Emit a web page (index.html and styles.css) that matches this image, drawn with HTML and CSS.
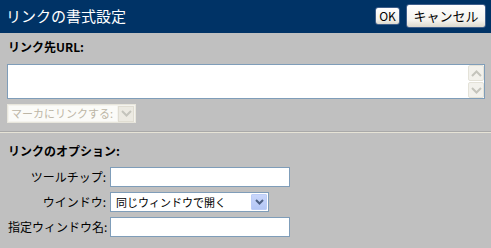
FILE: index.html
```html
<!DOCTYPE html>
<html lang="ja">
<head>
<meta charset="utf-8">
<link rel="stylesheet" href="styles.css">
</head>
<body>
<div class="dialog">
  <div class="header">
    <div class="title">リンクの書式設定</div>
    <div class="actions">
      <button class="btn btn-ok">OK</button>
      <button class="btn btn-cancel">キャンセル</button>
    </div>
  </div>
  <div class="section top">
    <div class="heading">リンク先URL:</div>
    <div class="urlbox">
      <div class="urltext"></div>
      <div class="scroll">
        <div class="sbtn"><svg width="11" height="7" viewBox="0 0 11 7"><path d="M1 6 L5.5 1.5 L10 6" fill="none" stroke="#c4c4bc" stroke-width="2"/></svg></div>
        <div class="sbtn"><svg width="11" height="7" viewBox="0 0 11 7"><path d="M1 1 L5.5 5.5 L10 1" fill="none" stroke="#c4c4bc" stroke-width="2"/></svg></div>
      </div>
    </div>
    <div class="marker">
      <div class="marker-text">マーカにリンクする:</div>
      <div class="marker-btn"><svg width="11" height="7" viewBox="0 0 11 7"><path d="M1 1 L5.5 5.5 L10 1" fill="none" stroke="#c4c4bc" stroke-width="2"/></svg></div>
    </div>
  </div>
  <div class="sep"></div>
  <div class="section opts">
    <div class="heading">リンクのオプション:</div>
    <div class="form">
      <div class="lbl">ツールチップ:</div>
      <div class="field"></div>
      <div class="lbl">ウインドウ:</div>
      <div class="select">
        <div class="select-text">同じウィンドウで開く</div>
        <div class="select-btn"><svg width="9" height="6" viewBox="0 0 9 6"><path d="M1 1 L4.5 4.5 L8 1" fill="none" stroke="#4d6185" stroke-width="2"/></svg></div>
      </div>
      <div class="lbl">指定ウィンドウ名:</div>
      <div class="field"></div>
    </div>
  </div>
</div>
</body>
</html>
```
FILE: styles.css
```css
* { box-sizing: border-box; }
html, body { margin: 0; padding: 0; }
body {
  width: 491px;
  height: 248px;
  background: #c0c0c0;
  font-family: "Noto Sans CJK JP", "DejaVu Sans", sans-serif;
  color: #000;
  overflow: hidden;
}
.header {
  height: 33px;
  background: #003366;
  display: flex;
  align-items: center;
  justify-content: space-between;
  padding: 0 5px 0 6px;
}
.title {
  color: #fff;
  font-size: 15px;
  line-height: 18px;
  margin-top: -2px;
}
.actions {
  display: flex;
  align-items: center;
  gap: 6px;
  margin-top: -1px;
}
.btn {
  font-family: "Noto Sans CJK JP", "DejaVu Sans", sans-serif;
  font-size: 12px;
  line-height: 14px;
  color: #000;
  background: linear-gradient(#ffffff, #f4f3ee 70%, #dcd9cd);
  border: 1px solid #3f5f8c;
  border-radius: 3px;
  padding: 0;
}
.btn-ok { width: 25px; height: 18px; }
.btn-cancel { width: 80px; height: 24px; font-size: 13px; }
.section { padding: 0 6px 0 7px; }
.heading {
  font-weight: bold;
  font-size: 12px;
  line-height: 16px;
  padding-left: 1px;
}
.top .heading { margin-top: 6px; }
.urlbox {
  margin-top: 9px;
  height: 35px;
  border: 1px solid #7f9db9;
  background: #fff;
  display: flex;
}
.urltext { flex: 1; }
.scroll {
  width: 17px;
  display: flex;
  flex-direction: column;
  gap: 1px;
  padding: 0 0 0 1px;
}
.sbtn {
  flex: 1;
  background: #f2f1ec;
  border: 1px solid #e4e2d8;
  border-radius: 2px;
  display: flex;
  align-items: center;
  justify-content: center;
}
.marker {
  margin-top: 5px;
  width: 129px;
  height: 19px;
  background: #f4f3ee;
  border: 1px solid #e8e6dc;
  display: flex;
  align-items: center;
  padding: 1px;
}
.marker-text {
  flex: 1;
  font-size: 11px;
  line-height: 15px;
  color: #bdb6a6;
  padding-left: 2px;
  white-space: nowrap;
  background: #fbfbf8;
}
.marker-btn {
  width: 16px;
  height: 16px;
  margin-left: 1px;
  background: #eceae2;
  border: 1px solid #e0ddd2;
  display: flex;
  align-items: center;
  justify-content: center;
}
.sep {
  margin-top: 8px;
  height: 2px;
  border-top: 1px solid #a9a9a9;
  border-bottom: 1px solid #e6e3d6;
}
.opts .heading { margin-top: 10px; }
.form {
  margin-top: 8px;
  display: grid;
  grid-template-columns: 98px auto;
  justify-content: start;
  align-items: center;
  column-gap: 4px;
  row-gap: 5px;
  padding-left: 1px;
}
.lbl {
  font-size: 12px;
  line-height: 16px;
  text-align: right;
  white-space: nowrap;
}
.field {
  width: 180px;
  height: 20px;
  background: #fff;
  border: 1px solid #7f9db9;
}
.select {
  width: 159px;
  height: 20px;
  background: #fff;
  border: 1px solid #7f9db9;
  display: flex;
  align-items: center;
  padding: 1px;
}
.select-text {
  flex: 1;
  font-size: 11px;
  line-height: 16px;
  padding-left: 4px;
  white-space: nowrap;
}
.select-btn {
  width: 16px;
  height: 16px;
  background: linear-gradient(#c9d6fb, #b4c7f5);
  border: 1px solid #bccdf7;
  border-radius: 1px;
  display: flex;
  align-items: center;
  justify-content: center;
}
```
